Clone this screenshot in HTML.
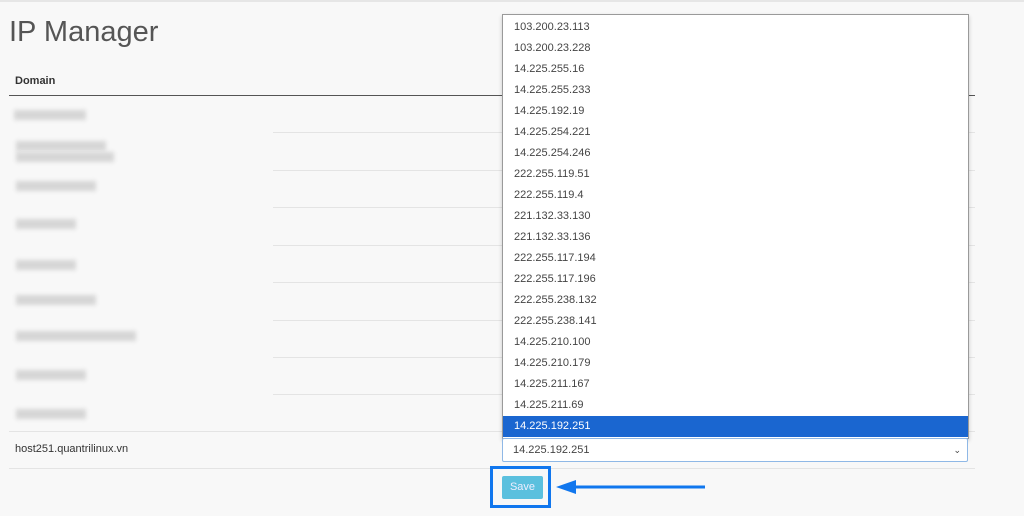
<!DOCTYPE html><html><head><style>
body{margin:0;width:1024px;height:516px;background:#f8f8f8;font-family:"Liberation Sans",sans-serif;position:relative;overflow:hidden}
.a{position:absolute}
.blur{position:absolute;background:#d6d6d6;filter:blur(2px);height:10px}
.row{position:absolute;left:273px;width:702px;height:1px;background:#e4e4e4}
#dd{left:502px;top:14px;width:465px;height:421px;padding-top:2px;background:#fff;border:1px solid #9a9a9a;box-shadow:0 2px 4px rgba(0,0,0,.2)}
#dd div{height:21px;line-height:21px;padding-left:11px;font-size:11px;color:#444}
#dd div.s{background:#1a66d0;color:#fff}
</style></head><body>
<div class="a" style="left:0;top:0;width:1024px;height:2px;background:#e6e6e6"></div>
<div class="a" style="left:9px;top:16px;font-size:29px;color:#555;font-weight:300">IP Manager</div>
<div class="a" style="left:15px;top:75px;font-size:11px;font-weight:bold;color:#333">Domain</div>
<div class="a" style="left:9px;top:95px;width:966px;height:1px;background:#555"></div>
<div class="row" style="top:132px"></div><div class="row" style="top:170px"></div><div class="row" style="top:207px"></div><div class="row" style="top:245px"></div><div class="row" style="top:282px"></div><div class="row" style="top:320px"></div><div class="row" style="top:357px"></div><div class="row" style="top:394px"></div><div class="row" style="top:431px;left:9px;width:966px"></div><div class="row" style="top:468px;left:9px;width:966px"></div>
<div class="blur" style="left:14px;top:110px;width:72px"></div>
<div class="blur" style="left:16px;top:141px;width:90px"></div><div class="blur" style="left:16px;top:152px;width:98px"></div>
<div class="blur" style="left:16px;top:181px;width:80px"></div>
<div class="blur" style="left:16px;top:219px;width:60px"></div>
<div class="blur" style="left:16px;top:260px;width:60px"></div>
<div class="blur" style="left:16px;top:295px;width:80px"></div>
<div class="blur" style="left:16px;top:331px;width:120px"></div>
<div class="blur" style="left:16px;top:370px;width:70px"></div>
<div class="blur" style="left:16px;top:409px;width:70px"></div>
<div class="a" style="left:15px;top:443px;font-size:11px;color:#333">host251.quantrilinux.vn</div>
<div id="dd" class="a">
<div>103.200.23.113</div><div>103.200.23.228</div><div>14.225.255.16</div><div>14.225.255.233</div><div>14.225.192.19</div><div>14.225.254.221</div><div>14.225.254.246</div><div>222.255.119.51</div><div>222.255.119.4</div><div>221.132.33.130</div><div>221.132.33.136</div><div>222.255.117.194</div><div>222.255.117.196</div><div>222.255.238.132</div><div>222.255.238.141</div><div>14.225.210.100</div><div>14.225.210.179</div><div>14.225.211.167</div><div>14.225.211.69</div><div class="s">14.225.192.251</div></div>
<div class="a" style="left:502px;top:438px;background:#fff;border:1px solid #8fb8e6;border-radius:2px;font-size:11px;color:#444;line-height:22px;padding-left:10px;box-sizing:border-box;width:466px;height:24px">14.225.192.251<span style="position:absolute;right:6px;top:0;font-size:9px">&#8964;</span></div>
<div class="a" style="left:490px;top:466px;width:55px;height:36px;border:3px solid #1177ee"></div>
<div class="a" style="left:502px;top:476px;width:41px;height:23px;background:#5bc0de;border-radius:2px;color:#eef;font-size:11px;text-align:center;line-height:23px">Save</div>
<svg class="a" style="left:552px;top:477px" width="160" height="22"><line x1="20" y1="10" x2="153" y2="10" stroke="#1177ee" stroke-width="3"/><polygon points="4,10 24,3 24,17" fill="#1177ee"/></svg>
</body></html>
